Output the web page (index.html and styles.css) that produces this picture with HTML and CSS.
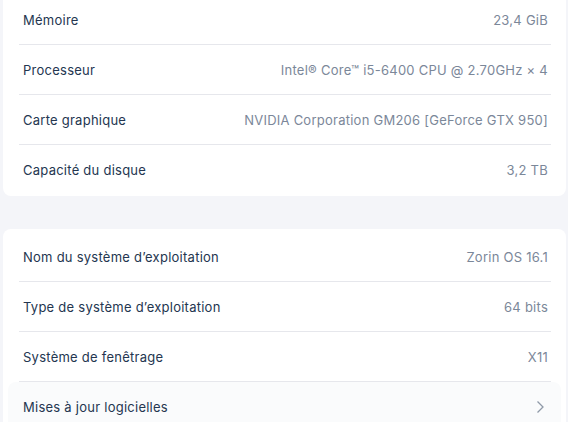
FILE: index.html
```html
<!DOCTYPE html>
<html lang="fr">
<head>
<meta charset="utf-8">
<link rel="stylesheet" href="styles.css">
</head>
<body>
<div class="page">
  <section class="card card-first">
    <div class="row"><span class="label">Mémoire</span><span class="value">23,4 GiB</span></div>
    <div class="sep"></div>
    <div class="row"><span class="label">Processeur</span><span class="value">Intel® Core™ i5-6400 CPU @ 2.70GHz × 4</span></div>
    <div class="sep"></div>
    <div class="row"><span class="label">Carte graphique</span><span class="value">NVIDIA Corporation GM206 [GeForce GTX 950]</span></div>
    <div class="sep"></div>
    <div class="row"><span class="label">Capacité du disque</span><span class="value">3,2 TB</span></div>
  </section>
  <section class="card">
    <div class="row"><span class="label">Nom du système d’exploitation</span><span class="value">Zorin OS 16.1</span></div>
    <div class="sep"></div>
    <div class="row"><span class="label">Type de système d’exploitation</span><span class="value">64 bits</span></div>
    <div class="sep"></div>
    <div class="row"><span class="label">Système de fenêtrage</span><span class="value">X11</span></div>
    <div class="sep"></div>
    <div class="row row-link"><span class="label">Mises à jour logicielles</span>
      <svg class="chev" width="10" height="14" viewBox="0 0 10 14"><path d="M2.5 1.5 L8 7 L2.5 12.5" fill="none" stroke="#8f99a8" stroke-width="1.3"/></svg>
    </div>
  </section>
</div>
</body>
</html>
```
FILE: styles.css
```css
html, body {
  margin: 0;
  padding: 0;
}
body {
  background: #f4f5f9;
  font-family: Inter, "Noto Sans", sans-serif;
  font-size: 13px;
  letter-spacing: 0.25px;
  overflow: hidden;
}
.page {
  margin: -8px 2px 0 3px;
  display: flex;
  flex-direction: column;
  gap: 33px;
}
.card {
  background: #ffffff;
  border-radius: 8px;
  padding: 3px 5px;
}
.card-first {
  padding-bottom: 2px;
}
.row {
  height: 49px;
  padding: 0 13px 0 15px;
  display: flex;
  align-items: center;
  justify-content: space-between;
}
.label {
  color: #243650;
}
.value {
  color: #7b8799;
}
.sep {
  height: 1px;
  background: #e6e7ec;
  margin: 0 10px 0 11px;
}
.row-link {
  background: #fafbfc;
  border-radius: 8px;
  padding-right: 16px;
}
.chev {
  display: block;
}
```
